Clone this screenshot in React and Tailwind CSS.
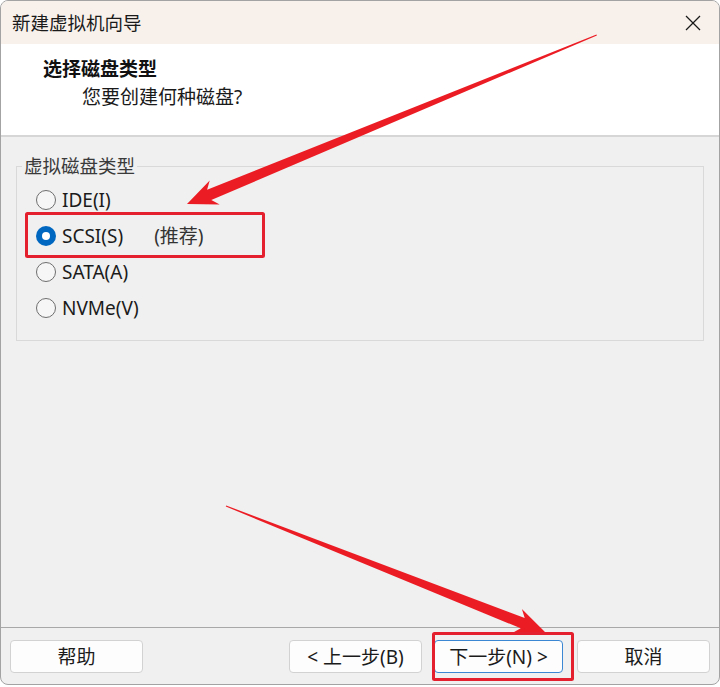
const font = { fontFamily: '"Noto Sans", "Noto Sans CJK SC", sans-serif' };

function Radio({ label, checked, extra }) {
  return (
    <div className="flex h-[36px] items-center">
      {checked ? (
        <span className="flex h-[20px] w-[20px] items-center justify-center rounded-full bg-[#0067c0]">
          <span className="h-[8px] w-[8px] rounded-full bg-white" />
        </span>
      ) : (
        <span className="h-[20px] w-[20px] rounded-full border border-[#6e6e6e] bg-[#f6f6f6]" />
      )}
      <span className="ml-[6px] text-[19px] leading-[24px] text-[#1b1b1b]">{label}</span>
      {extra && <span className="ml-[31px] text-[19px] leading-[24px] text-[#333]">{extra}</span>}
    </div>
  );
}

function Button({ children, primary, className = '' }) {
  return (
    <button
      className={`flex h-[33px] items-center justify-center rounded-[4px] border bg-[#fdfdfd] text-[19px] leading-[24px] text-[#1b1b1b] ${
        primary ? 'border-[#3c87d3]' : 'border-[#d2d2d2]'
      } ${className}`}
    >
      {children}
    </button>
  );
}

export default function App() {
  return (
    <div className="relative h-[687px] w-[720px] bg-white" style={font}>
      <div className="flex h-[685px] flex-col overflow-hidden rounded-[8px] border border-[#a3a3a3] bg-[#f0f0f0]">
        {/* title bar */}
        <div className="flex h-[43px] shrink-0 items-center justify-between bg-[#f8f1eb] pl-[11px] pr-[18px]">
          <span className="text-[18.5px] leading-[24px] text-[#1a1a1a]">新建虚拟机向导</span>
          <svg width="16" height="16" viewBox="0 0 16 16" fill="none" stroke="#1a1a1a" strokeWidth="1.3">
            <line x1="1" y1="1" x2="15" y2="15" />
            <line x1="15" y1="1" x2="1" y2="15" />
          </svg>
        </div>

        {/* header */}
        <div className="h-[93px] shrink-0 border-b-2 border-[#d6d6d6] bg-white pl-[42px] pt-[12px]">
          <div className="text-[19px] font-bold leading-[26px] text-[#111]">选择磁盘类型</div>
          <div className="ml-[39px] mt-[2px] text-[19px] leading-[26px] text-[#1a1a1a]">您要创建何种磁盘?</div>
        </div>

        {/* body */}
        <div className="flex-1">
          <fieldset className="mx-[15px] mt-[17px] border border-[#d9d9d9] pb-[14px] pl-[5px]">
            <legend className="px-[2px] text-[18.5px] leading-[24px] text-[#3a3a3a]">虚拟磁盘类型</legend>
            <div className="mt-[4px] pl-[14px]">
              <Radio label="IDE(I)" />
              <Radio label="SCSI(S)" checked extra="(推荐)" />
              <Radio label="SATA(A)" />
              <Radio label="NVMe(V)" />
            </div>
          </fieldset>
        </div>

        {/* footer */}
        <div className="flex h-[57px] shrink-0 border-t border-[#a8a8a8] px-[9px] pt-[12px]">
          <Button className="w-[133px]">帮助</Button>
          <div className="ml-auto flex">
            <Button className="w-[133px]">&lt; 上一步(B)</Button>
            <Button primary className="ml-[12px] w-[129px]">下一步(N) &gt;</Button>
            <Button className="ml-[14px] w-[133px]">取消</Button>
          </div>
        </div>
      </div>

      {/* annotations */}
      <svg className="pointer-events-none absolute inset-0" width="720" height="687" viewBox="0 0 720 687">
        <g fill="#ec1c24">
          <polygon points="596.9,35.5 211.3,200 219.7,204.6 187,204 209.7,180.6 207.1,189.7 596.5,34.5" />
          <polygon points="225.8,506.5 520.7,628.3 512.3,633.1 545,632 521.9,608.9 524.7,618.1 226.2,505.5" />
        </g>
        <g fill="none" stroke="#e5202e" strokeWidth="3">
          <rect x="26.5" y="213.5" width="237" height="43" rx="1" />
          <rect x="433.5" y="633.5" width="139" height="46" rx="1" />
        </g>
      </svg>
    </div>
  );
}
